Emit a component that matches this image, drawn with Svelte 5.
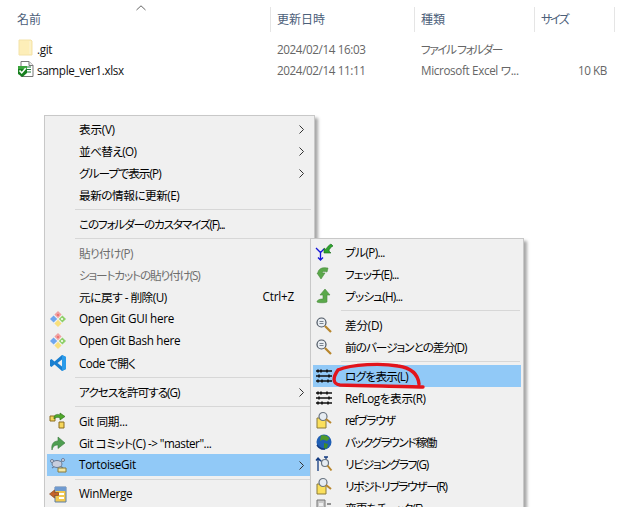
<script>
  const files = [
    { name: ".git", icon: "folder", date: "2024/02/14 16:03", type: "ファイル フォルダー", size: "" },
    { name: "sample_ver1.xlsx", icon: "xlsx", date: "2024/02/14 11:11", type: "Microsoft Excel ワ...", size: "10 KB" }
  ];

  const mainMenu = [
    { label: "表示(V)", arrow: true },
    { label: "並べ替え(O)", arrow: true },
    { label: "グループで表示(P)", arrow: true },
    { label: "最新の情報に更新(E)" },
    { sep: true },
    { label: "このフォルダーのカスタマイズ(F)..." },
    { sep: true },
    { label: "貼り付け(P)", disabled: true },
    { label: "ショートカットの貼り付け(S)", disabled: true },
    { label: "元に戻す - 削除(U)", shortcut: "Ctrl+Z" },
    { label: "Open Git GUI here", icon: "git" },
    { label: "Open Git Bash here", icon: "git" },
    { label: "Code で開く", icon: "vscode" },
    { sep: true },
    { label: "アクセスを許可する(G)", arrow: true },
    { sep: true },
    { label: "Git 同期...", icon: "sync" },
    { label: "Git コミット(C) -> \"master\"...", icon: "commit" },
    { label: "TortoiseGit", icon: "tortoise", arrow: true, active: true },
    { sep: true },
    { label: "WinMerge", icon: "winmerge" }
  ];

  const subMenu = [
    { label: "プル(P)...", icon: "pull" },
    { label: "フェッチ(E)...", icon: "fetch" },
    { label: "プッシュ(H)...", icon: "push" },
    { sep: true },
    { label: "差分(D)", icon: "diff" },
    { label: "前のバージョンとの差分(D)", icon: "diff" },
    { sep: true },
    { label: "ログを表示(L)", icon: "log", active: true },
    { label: "RefLogを表示(R)", icon: "log" },
    { label: "refブラウザ", icon: "browser" },
    { label: "バックグラウンド稼働", icon: "globe" },
    { label: "リビジョングラフ(G)", icon: "graph" },
    { label: "リポジトリブラウザー(R)", icon: "browser" },
    { label: "変更をチェック(F)", icon: "check" }
  ];

  // the UI font sets kana much narrower than Noto does, so tighten by share of kana
  function tighten(text, base = -0.3) {
    const kana = (text.match(/[\u3040-\u30ff]/g) || []).length;
    return `letter-spacing: ${(base - (1.3 * kana) / text.length).toFixed(2)}px`;
  }
</script>

{#snippet icon(name)}
  <svg class="ico" width="18" height="18" viewBox="0 0 18 18">
    {#if name === "folder"}
      <path d="M2 1h12l1 1v14H2z" fill="#fdeeb8" stroke="#f3e2a8" />
      <path d="M13 2v13" stroke="#fbf5d8" />
    {:else if name === "xlsx"}
      <path d="M4 1.5h8l4 4v11H4z" fill="#fff" stroke="#777" />
      <path d="M12 1.5v4h4" fill="#eee" stroke="#777" />
      <path d="M10 7h4M10 9.5h4M10 12h4" stroke="#1e7a3a" stroke-width="1.2" />
      <path d="M1 6h9v7l-4.5 4L1 14z" fill="#17801f" />
      <path d="M1 6h9v3H1z" fill="#3aa53c" />
      <path d="M2.5 10.5l2.2 2.4 4-4.6" fill="none" stroke="#fff" stroke-width="1.6" />
    {:else if name === "git"}
      <path d="M9 1l3.6 3.6L9 8.2 5.4 4.600z" fill="#f0a0a0" />
      <path d="M13.4 5.4L17 9l-3.600 3.600L9.800 9z" fill="#8fd06a" />
      <path d="M9 9.800l3.600 3.600L9 17l-3.600-3.600z" fill="#f8df7c" />
      <path d="M4.600 5.400L8.200 9l-3.600 3.600L1 9z" fill="#6ea6ee" />
      <circle cx="9" cy="5" r="1" fill="#e66" />
      <circle cx="13" cy="9" r="1" fill="#fff" />
    {:else if name === "vscode"}
      <path d="M13 1l4 2v12l-4 2L5.500 10.500 2.500 13 1 12V6l1.500-1 3 2.500z" fill="#1a7fd0" />
      <path d="M13 1l4 2v12l-4 2z" fill="#2a9bea" />
      <path d="M13 5.500L8.500 9l4.500 3.500z" fill="#f0f0f0" />
    {:else if name === "sync"}
      <path d="M1 4h5v5H1z" fill="#f6d65a" stroke="#8a6d20" />
      <path d="M10 10h5v6h-5z" fill="#f6d65a" stroke="#8a6d20" />
      <path d="M5 5c1-3 4-3 6-2V1l5 3.500L11 8V6C9 5 7 5 5 7z" fill="#4fa82c" stroke="#2c6a16" stroke-width=".6" />
    {:else if name === "commit"}
      <path d="M3 16c-1-5 1-9 6-9V3l7 6-7 5.500V11c-3 0-5 1-6 5z" fill="#4e9e50" stroke="#3c7a3e" stroke-width=".6" />
    {:else if name === "tortoise"}
      <path d="M3 4l11 8M14 4L3 12" stroke="#6a7c96" stroke-width="1.200" />
      <ellipse cx="8" cy="8" rx="5" ry="3.500" fill="#c8cede" stroke="#6a7c96" />
      <circle cx="3" cy="5" r="1.500" fill="#dfe4ee" stroke="#6a7c96" />
      <circle cx="14" cy="4" r="1.500" fill="#dfe4ee" stroke="#6a7c96" />
      <path d="M9 12h8v4H9z" fill="#f3e7a4" stroke="#8a7a3a" />
    {:else if name === "winmerge"}
      <path d="M6 2h11v15H6z" fill="#f2c94f" stroke="#5d7ea6" />
      <path d="M6 2h11v4H6z" fill="#6f9ad0" />
      <path d="M10 8h5v2h-5zM10 12h5v2h-5z" fill="#fff" />
      <path d="M.5 9l5-4v2.500h4v3h-4V13z" fill="#c4622a" stroke="#7d3c14" stroke-width=".6" />
    {:else if name === "pull"}
      <path d="M1 5l4.500 4.500L9 6M5.500 9.500V17M3 14.500L5.500 17 8 14.500" fill="none" stroke="#1414d8" stroke-width="1.300" />
      <path d="M9 10V5l2 1.500C12 4 14 2 16 1l2 2c-2 1-4 3-4 5l2 2z" fill="#2ea52e" stroke="#1a6a1a" stroke-width=".6" />
    {:else if name === "fetch"}
      <path d="M3 8c0-4 4-6 9-5l1 0-1 4c-3-1-5 0-5 1h3l-4 6-4-6z" fill="#5aa84a" stroke="#4a8a3e" stroke-width=".6" />
    {:else if name === "push"}
      <path d="M2 15c0-1 1-3 6-3V8H5l5-6 5 6h-3v7c-1 1-9 1-10 0z" fill="#5aa84a" stroke="#4a8a3e" stroke-width=".6" />
    {:else if name === "diff"}
      <circle cx="6.500" cy="6.500" r="4.500" fill="#e9eef3" stroke="#4a5460" stroke-width="1.200" />
      <path d="M4.500 5.500h4M4.500 7.500h4" stroke="#7a8490" />
      <path d="M10 10l6 6" stroke="#b8862c" stroke-width="2.200" />
    {:else if name === "log"}
      <path d="M1 4h16M1 9h16M1 14h16" stroke="#111" stroke-width="1.400" />
      <path d="M3 2.500v3M6 2.500v3M12 2.500v3M4 7.500v3M14 7.500v3M3 12.500v3M7 12.500v3M13 12.500v3" stroke="#111" stroke-width="1.600" />
    {:else if name === "browser"}
      <path d="M2 7h9v10H2z" fill="#fbe05c" stroke="#8a7a3a" />
      <circle cx="8" cy="5.500" r="4" fill="#e6ecf2" stroke="#6a7480" stroke-width="1.200" />
      <path d="M11 8l5 4" stroke="#b8862c" stroke-width="2" />
    {:else if name === "globe"}
      <circle cx="9" cy="9" r="7.500" fill="#1f5fb4" />
      <path d="M6 2.500c3-1 7 0 8.500 3L12 8 8 6.500 5 8z" fill="#4f9a2a" />
      <path d="M9 10l4 1-1 4-3 1z" fill="#3f8a2a" />
      <path d="M2 12c2 3 5 4.500 8 4" fill="none" stroke="#123a80" stroke-width="1.500" />
    {:else if name === "graph"}
      <path d="M3 16V3M1 5.500L3 3l2 2.500M3 3l6 6M9 2h4M11 2v3" fill="none" stroke="#123a80" stroke-width="1.300" />
      <circle cx="10" cy="8" r="3.500" fill="#e6ecf2" stroke="#6a7480" stroke-width="1.200" />
      <path d="M12.500 10.500l4 5" stroke="#b8862c" stroke-width="2" />
    {:else if name === "check"}
      <path d="M2 1h8v17H2z" fill="#c9c9c9" stroke="#777" />
      <path d="M4 4h4v3H4z" fill="#eee" />
      <path d="M12 5h4M12 9h4" stroke="#333" />
    {/if}
  </svg>
{/snippet}

{#snippet menuRows(rows)}
  {#each rows as row}
    {#if row.sep}
      <div class="sep"></div>
    {:else}
      <div class="row" class:active={row.active} class:disabled={row.disabled}>
        <span class="gutter">
          {#if row.icon}{@render icon(row.icon)}{/if}
        </span>
        <span class="label" style={tighten(row.label)}>{row.label}</span>
        {#if row.shortcut}<span class="shortcut">{row.shortcut}</span>{/if}
        {#if row.arrow}
          <svg class="arrow" width="5" height="9" viewBox="0 0 5 9">
            <path d="M.5 .5l4 4-4 4" fill="none" stroke="#333" />
          </svg>
        {/if}
      </div>
    {/if}
  {/each}
{/snippet}

<div class="explorer">
  <svg class="sort" width="10" height="6" viewBox="0 0 10 6">
    <path d="M.5 5L5 .8 9.500 5" fill="none" stroke="#666" />
  </svg>
  <div class="head">
    <div class="col c-name">名前</div>
    <div class="col c-date">更新日時</div>
    <div class="col c-type">種類</div>
    <div class="col c-size" style={tighten("サイズ", -0.7)}>サイズ</div>
  </div>
  <div class="files">
    {#each files as f}
      <div class="file">
        <div class="c-name fname">
          {@render icon(f.icon)}
          <span>{f.name}</span>
        </div>
        <div class="c-date meta">{f.date}</div>
        <div class="c-type meta" style={tighten(f.type)}>{f.type}</div>
        <div class="c-size meta size">{f.size}</div>
      </div>
    {/each}
  </div>

  <div class="menu main">
    {@render menuRows(mainMenu)}
  </div>
  <div class="menu sub">
    {@render menuRows(subMenu)}
  </div>

  <svg class="scribble" width="100" height="32" viewBox="0 0 100 32">
    <path d="M6 8C20 2 50 1 66 4C80 6 86 12 87 22M6 8C1 15 0 22 8 23C35 24 70 24 91 25" fill="none" stroke="#e2141c" stroke-width="3.400" stroke-linecap="round" />
  </svg>
</div>

<style>
  :global(body) {
    background: #fff;
    overflow: hidden;
  }

  .explorer {
    position: relative;
    width: 630px;
    height: 507px;
    overflow: hidden;
    font-family: "Open Sans", "Noto Sans CJK JP", sans-serif;
    font-size: 11.7px;
    font-feature-settings: "palt";
    color: #000;
  }

  .sort {
    position: absolute;
    left: 136px;
    top: 5px;
  }

  .head {
    display: flex;
    padding-top: 7px;
    height: 25px;
  }

  .col {
    box-sizing: border-box;
    height: 25px;
    line-height: 26px;
    font-size: 12px;
    color: #4c607a;
    border-right: 1px solid #e5e5e5;
  }

  .c-name {
    width: 271px;
    padding-left: 17px;
    box-sizing: border-box;
  }

  .c-date {
    width: 144px;
    padding-left: 6px;
    box-sizing: border-box;
  }

  .c-type {
    width: 120px;
    padding-left: 6px;
    box-sizing: border-box;
  }

  .c-size {
    width: 80px;
    padding-left: 6px;
    box-sizing: border-box;
  }

  .files {
    padding-top: 6px;
  }

  .file {
    display: flex;
    align-items: center;
    height: 21px;
  }

  .fname {
    display: flex;
    align-items: center;
    gap: 2px;
    color: #111;
    letter-spacing: -0.35px;
  }

  .fname .ico {
    margin-top: -2px;
  }

  .meta {
    color: #666;
    white-space: nowrap;
    overflow: hidden;
    letter-spacing: -0.4px;
  }

  .size {
    text-align: right;
    padding-right: 8px;
  }

  .menu {
    position: absolute;
    box-sizing: border-box;
    background: #f0f0f0;
    border: 1px solid #c8c8c8;
    padding: 2px;
    box-shadow: 3px 3px 3px rgba(0, 0, 0, 0.35);
  }

  .main {
    left: 44px;
    top: 115px;
    width: 271px;
    height: 420px;
  }

  .sub {
    left: 310px;
    top: 238px;
    width: 214px;
    height: 320px;
  }

  .row {
    display: flex;
    align-items: center;
    height: 22px;
    white-space: nowrap;
  }

  .row.active {
    background: #91c9f7;
  }

  .row.disabled {
    color: #6d6d6d;
  }

  .gutter {
    display: flex;
    align-items: center;
    flex: none;
    box-sizing: border-box;
    width: 32px;
    padding-left: 2px;
  }

  .label {
    flex: 1;
    padding-bottom: 2px;
  }

  .shortcut {
    margin-right: 18px;
    padding-bottom: 2px;
    letter-spacing: -0.2px;
  }

  .arrow {
    margin-right: 8px;
  }

  .sep {
    height: 1px;
    margin: 3px 1px 3px 28px;
    background: #d7d7d7;
  }

  .scribble {
    position: absolute;
    left: 332px;
    top: 362px;
  }
</style>
